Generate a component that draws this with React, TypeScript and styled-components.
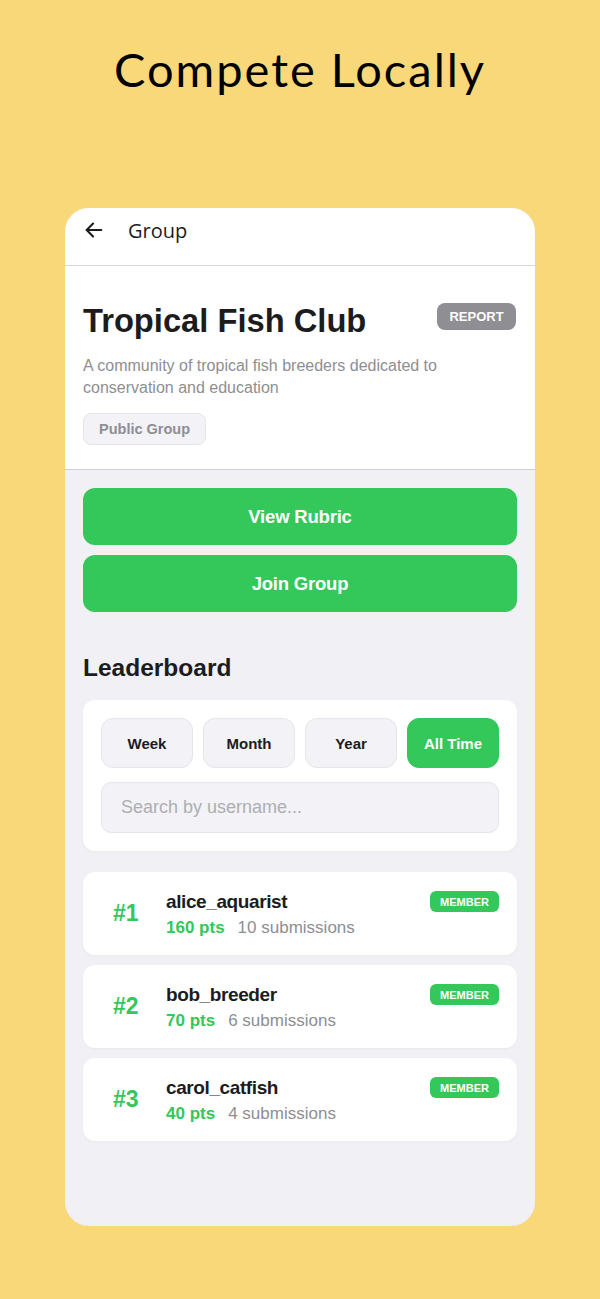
import React from "react";
import styled, { createGlobalStyle } from "styled-components";

const GlobalStyle = createGlobalStyle`
  html, body {
    margin: 0;
    padding: 0;
    background: #f8d878;
  }
  * {
    box-sizing: border-box;
  }
`;

const green = "#34c759";

const Page = styled.div`
  width: 600px;
  height: 1299px;
  background: #f8d878;
  display: flex;
  flex-direction: column;
  align-items: center;
  padding-top: 41px;
`;

const Headline = styled.h1`
  margin: 0;
  font-family: "Lato", "Noto Sans", sans-serif;
  font-weight: 400;
  font-size: 47px;
  letter-spacing: 2px;
  line-height: 56px;
  color: #000;
`;

const Phone = styled.div`
  margin-top: 111px;
  width: 470px;
  height: 1018px;
  background: #f0f0f5;
  border-radius: 24px;
  overflow: hidden;
  display: flex;
  flex-direction: column;
  font-family: "Liberation Sans", Arial, sans-serif;
`;

const TopBar = styled.div`
  height: 58px;
  background: #fff;
  border-bottom: 1px solid #d8d8dc;
  display: flex;
  align-items: center;
  padding: 0 0 13px 18px;
  gap: 23px;
`;

const BarTitle = styled.span`
  font-family: "Open Sans", "Noto Sans", sans-serif;
  font-size: 20px;
  color: #1c1c1e;
`;

const Info = styled.section`
  background: #fff;
  border-bottom: 1px solid #d0d0d4;
  padding: 37px 18px 24px;
`;

const TitleRow = styled.div`
  display: flex;
  justify-content: space-between;
  align-items: flex-start;
`;

const ClubName = styled.h2`
  margin: 0;
  font-size: 32.7px;
  line-height: 36px;
  font-weight: 700;
  color: #1c1c1e;
`;

const ReportButton = styled.button`
  border: none;
  background: #8e8e93;
  color: #fff;
  font-family: inherit;
  font-weight: 700;
  font-size: 13px;
  height: 27px;
  width: 79px;
  padding: 0;
  border-radius: 8px;
  margin-right: 1px;
`;

const Description = styled.p`
  margin: 16px 0 0;
  font-size: 16px;
  line-height: 22px;
  color: #8e8e93;
`;

const Chip = styled.span`
  display: inline-flex;
  align-items: center;
  margin-top: 14px;
  height: 32px;
  padding: 0 15px;
  border-radius: 8px;
  background: #f2f2f7;
  border: 1px solid #e5e5ea;
  color: #8e8e93;
  font-weight: 700;
  font-size: 14.5px;
`;

const Body = styled.div`
  padding: 18px 18px 0;
  display: flex;
  flex-direction: column;
`;

const PrimaryButton = styled.button`
  height: 57px;
  border: none;
  border-radius: 12px;
  background: ${green};
  color: #fff;
  font-family: inherit;
  font-size: 18.5px;
  font-weight: 700;
  letter-spacing: -0.2px;
  & + & {
    margin-top: 10px;
  }
`;

const SectionTitle = styled.h3`
  margin: 41px 0 17px;
  font-size: 24.5px;
  line-height: 30px;
  font-weight: 700;
  color: #1c1c1e;
`;

const Card = styled.div`
  background: #fff;
  border-radius: 12px;
  box-shadow: 0 1px 3px rgba(0, 0, 0, 0.04);
`;

const FilterCard = styled(Card)`
  padding: 18px;
  display: flex;
  flex-direction: column;
  gap: 14px;
`;

const Tabs = styled.div`
  display: grid;
  grid-template-columns: repeat(4, 1fr);
  gap: 10px;
`;

const Tab = styled.button<{ $active?: boolean }>`
  height: 50px;
  border-radius: 12px;
  border: 1px solid ${(p) => (p.$active ? green : "#e5e5ea")};
  background: ${(p) => (p.$active ? green : "#f2f2f7")};
  color: ${(p) => (p.$active ? "#fff" : "#1c1c1e")};
  font-family: inherit;
  font-weight: 700;
  font-size: 15px;
`;

const Search = styled.input`
  height: 51px;
  border-radius: 10px;
  border: 1px solid #e5e5ea;
  background: #f2f2f7;
  padding: 0 19px;
  font-family: inherit;
  font-size: 18px;
  color: #1c1c1e;
  outline: none;
  &::placeholder {
    color: #aeaeb2;
  }
`;

const List = styled.div`
  margin-top: 21px;
  display: flex;
  flex-direction: column;
  gap: 10px;
`;

const Row = styled(Card)`
  height: 83px;
  display: flex;
  align-items: flex-start;
  padding: 19px 18px 0 30px;
`;

const Rank = styled.span`
  width: 53px;
  margin-top: 9px;
  font-size: 23px;
  font-weight: 700;
  color: ${green};
`;

const UserInfo = styled.div`
  flex: 1;
  display: flex;
  flex-direction: column;
  gap: 5px;
`;

const Username = styled.span`
  font-size: 19px;
  font-weight: 700;
  color: #1c1c1e;
  letter-spacing: -0.4px;
`;

const Stats = styled.div`
  display: flex;
  gap: 13px;
  font-size: 17px;
`;

const Points = styled.span`
  color: ${green};
  font-weight: 700;
`;

const Submissions = styled.span`
  color: #8e8e93;
`;

const Badge = styled.span`
  background: ${green};
  color: #fff;
  font-size: 11px;
  font-weight: 700;
  height: 21px;
  padding: 0 10px;
  border-radius: 6px;
  display: inline-flex;
  align-items: center;
`;

const BackArrow = () => (
  <svg width="22" height="22" viewBox="0 0 24 24" fill="none" stroke="#1c1c1e" strokeWidth="2.2" strokeLinecap="round" strokeLinejoin="round">
    <path d="M20 12H4" />
    <path d="M11 5l-7 7 7 7" />
  </svg>
);

const members = [
  { rank: 1, name: "alice_aquarist", pts: 160, subs: 10 },
  { rank: 2, name: "bob_breeder", pts: 70, subs: 6 },
  { rank: 3, name: "carol_catfish", pts: 40, subs: 4 },
];

const periods = ["Week", "Month", "Year", "All Time"];

export default function App() {
  return (
    <Page>
      <GlobalStyle />
      <Headline>Compete Locally</Headline>
      <Phone>
        <TopBar>
          <BackArrow />
          <BarTitle>Group</BarTitle>
        </TopBar>
        <Info>
          <TitleRow>
            <ClubName>Tropical Fish Club</ClubName>
            <ReportButton>REPORT</ReportButton>
          </TitleRow>
          <Description>
            A community of tropical fish breeders dedicated to conservation and education
          </Description>
          <Chip>Public Group</Chip>
        </Info>
        <Body>
          <PrimaryButton>View Rubric</PrimaryButton>
          <PrimaryButton>Join Group</PrimaryButton>
          <SectionTitle>Leaderboard</SectionTitle>
          <FilterCard>
            <Tabs>
              {periods.map((p) => (
                <Tab key={p} $active={p === "All Time"}>
                  {p}
                </Tab>
              ))}
            </Tabs>
            <Search placeholder="Search by username..." />
          </FilterCard>
          <List>
            {members.map((m) => (
              <Row key={m.rank}>
                <Rank>#{m.rank}</Rank>
                <UserInfo>
                  <Username>{m.name}</Username>
                  <Stats>
                    <Points>{m.pts} pts</Points>
                    <Submissions>{m.subs} submissions</Submissions>
                  </Stats>
                </UserInfo>
                <Badge>MEMBER</Badge>
              </Row>
            ))}
          </List>
        </Body>
      </Phone>
    </Page>
  );
}
